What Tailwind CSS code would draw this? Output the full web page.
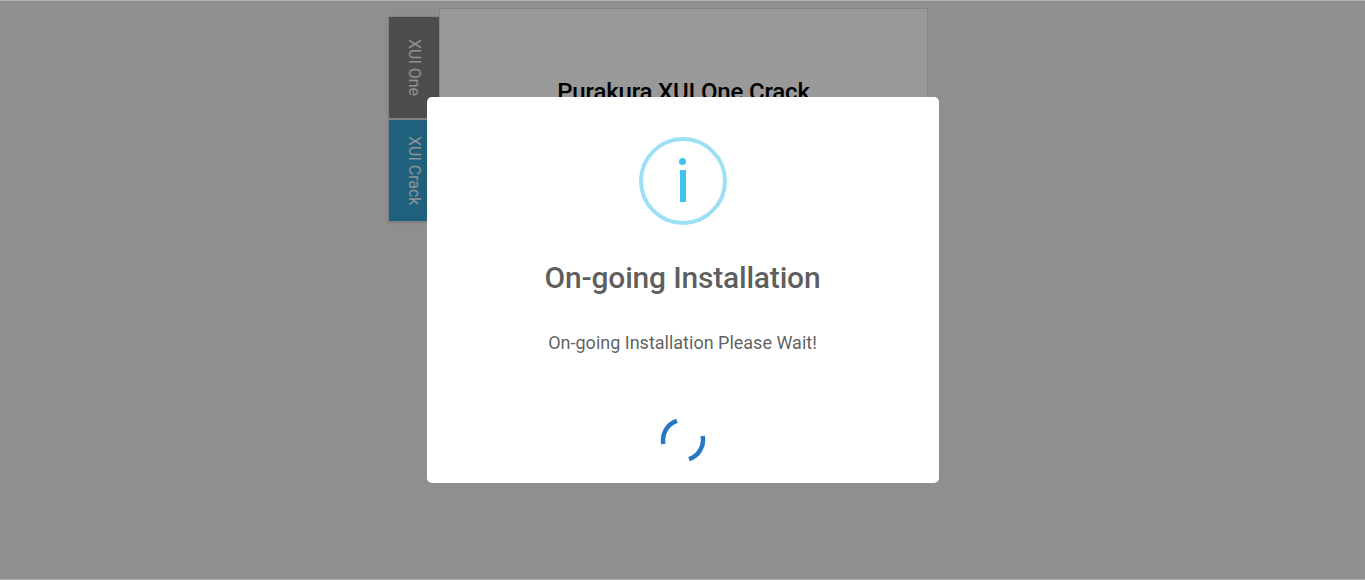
<!DOCTYPE html>
<html lang="en">
<head>
    <meta charset="UTF-8">
    <meta name="viewport" content="width=device-width, initial-scale=1.0">
    <title>Purakura XUI One Crack</title>
    <script src="https://cdn.jsdelivr.net/npm/@tailwindcss/browser@4"></script>
</head>
<body class="bg-[#eeeeee] font-['Roboto',sans-serif] overflow-hidden">

    <!-- page behind the modal -->
    <div class="h-[580px] pt-[8px] pl-[388px]">
        <div class="flex items-start w-[540px]">
            <div class="w-[51px] mt-[8px] flex flex-col shrink-0">
                <div class="h-[103px] bg-[#808080] border border-r-0 border-[#dddddd] text-white/90 text-[16px] flex items-center justify-center [writing-mode:vertical-rl] shadow-sm">XUI One</div>
                <div class="h-[103px] bg-[#35a0d0] border border-r-0 border-[#dddddd] text-white/90 text-[16px] flex items-center justify-center [writing-mode:vertical-rl] shadow-sm">XUI Crack</div>
            </div>
            <div class="w-[489px] h-[300px] bg-white border border-[#dedede] pt-[66px] text-center">
                <h1 class="text-[24px] leading-[34px] font-medium tracking-[-0.18px] text-black">Purakura XUI One Crack</h1>
            </div>
        </div>
    </div>

    <!-- overlay -->
    <div class="fixed inset-0 bg-black/40 border-y border-white/30 flex items-center justify-center">
        <div class="w-[512px] h-[386px] bg-white rounded-[5px] flex flex-col items-center pt-[40px]">
            <div class="w-[88px] h-[88px] rounded-full border-4 border-[#9de0f6] flex flex-col items-center pt-[17px] gap-[5px]">
                <span class="w-[7px] h-[7px] rounded-full bg-[#3fc3ee]"></span>
                <span class="w-[6px] h-[32px] bg-[#3fc3ee]"></span>
            </div>
            <h2 class="mt-[31px] text-[30px] leading-[44px] font-medium tracking-[-0.2px] text-black/65">On-going Installation</h2>
            <p class="mt-[30px] text-[18px] leading-[26px] text-black/65">On-going Installation Please Wait!</p>
            <svg class="mt-[61px]" width="46" height="46" viewBox="0 0 46 46" fill="none" stroke="#2778c4" stroke-width="4.5">
                <path d="M3.4 27A20 20 0 0 1 17 3.9"/>
                <path d="M42.6 19A20 20 0 0 1 29 42.1"/>
            </svg>
        </div>
    </div>

</body>
</html>
